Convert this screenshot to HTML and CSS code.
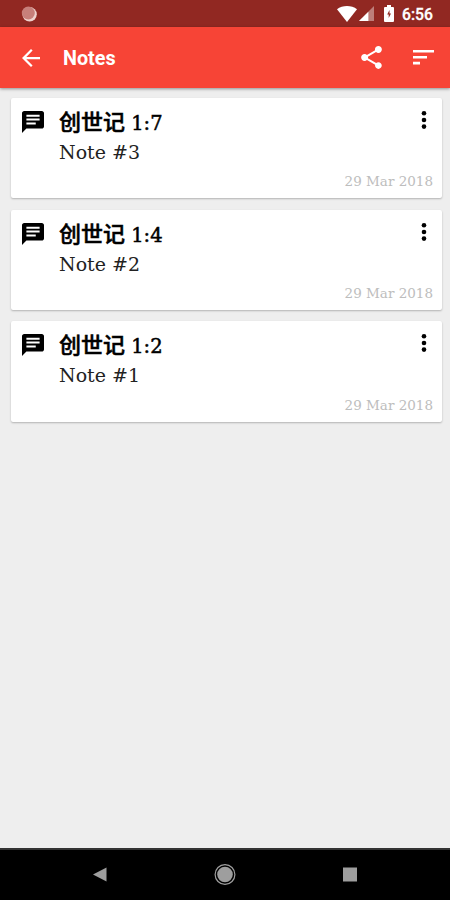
FILE: index.html
```html
<!DOCTYPE html>
<html lang="en">
<head>
<meta charset="utf-8">
<title>Notes</title>
<link rel="stylesheet" href="styles.css">
</head>
<body>
<svg class="defs" width="0" height="0">
  <symbol id="note" viewBox="2 2 20 20" preserveAspectRatio="none"><path d="M20 2H4c-1.100 0-2 .9-2 2v18l4-4h14c1.100 0 2-.9 2-2V4c0-1.100-.9-2-2-2zM6 5.400h12v1.800H6zm0 3.500h12v1.800H6zm0 3.500h8.500v1.800H6z"/></symbol>
  <symbol id="more" viewBox="0 0 8 20"><circle cx="4" cy="3.200" r="2.300"/><circle cx="4" cy="10" r="2.300"/><circle cx="4" cy="16.600" r="2.300"/></symbol>
</svg>
<div class="screen">
  <header class="status">
    <svg class="sync" viewBox="0 0 16 16"><circle cx="8.600" cy="8.300" r="7.200" fill="#efd2cd"/><circle cx="7.300" cy="7" r="6.500" fill="#c77f7a"/></svg>
    <svg class="wifi" viewBox="0 0 20 16"><path d="M0 3.200C5.500-1 14.500-1 20 3.200L10 16z"/></svg>
    <svg class="signal" viewBox="0 0 16 16"><path d="M0 16L16 0v16z" opacity=".4"/><path d="M0 16L10 6v10z"/></svg>
    <svg class="battery" viewBox="0 0 10 17"><path fill-rule="evenodd" d="M3 0h4v2h2q1 0 1 1v13q0 1-1 1H1q-1 0-1-1V3q0-1 1-1h2zM5.500 5L3.200 9.500h1.500v3.500L7 8.500H5.500z"/></svg>
    <span class="clock">6:56</span>
  </header>
  <nav class="toolbar">
    <svg class="back" viewBox="4 4 16 16"><path d="M20 11H7.830l5.590-5.590L12 4l-8 8 8 8 1.410-1.410L7.830 13H20z"/></svg>
    <h1>Notes</h1>
    <svg class="share" viewBox="3 2 18 20"><path d="M18 16.080c-.76 0-1.440.3-1.960.77L8.910 12.700c.05-.23.09-.46.09-.7s-.04-.47-.09-.7l7.050-4.110c.54.5 1.250.81 2.040.81 1.660 0 3-1.340 3-3s-1.340-3-3-3-3 1.340-3 3c0 .24.04.47.09.7L8.040 9.810C7.500 9.310 6.790 9 6 9c-1.660 0-3 1.340-3 3s1.340 3 3 3c.79 0 1.500-.31 2.040-.81l7.120 4.160c-.05.21-.08.43-.08.65 0 1.610 1.310 2.920 2.920 2.920s2.920-1.310 2.920-2.920-1.310-2.920-2.920-2.920z"/></svg>
    <svg class="sort" viewBox="0 0 21 15"><path d="M0 0h21v2.600H0zM0 6h14v2.600H0zM0 11.800h7v2.600H0z"/></svg>
  </nav>
  <main class="list">
    <article class="card">
      <svg class="note"><use href="#note"/></svg>
      <div class="text"><h2><span class="book">创世记</span> 1:7</h2><p>Note #3</p></div>
      <svg class="more"><use href="#more"/></svg>
      <time>29 Mar 2018</time>
    </article>
    <article class="card">
      <svg class="note"><use href="#note"/></svg>
      <div class="text"><h2><span class="book">创世记</span> 1:4</h2><p>Note #2</p></div>
      <svg class="more"><use href="#more"/></svg>
      <time>29 Mar 2018</time>
    </article>
    <article class="card">
      <svg class="note"><use href="#note"/></svg>
      <div class="text"><h2><span class="book">创世记</span> 1:2</h2><p>Note #1</p></div>
      <svg class="more"><use href="#more"/></svg>
      <time>29 Mar 2018</time>
    </article>
  </main>
  <footer class="navbar">
    <svg viewBox="0 0 22 22"><path d="M4 10.500L17.500 3.500v14z"/></svg>
    <svg viewBox="0 0 22 22"><circle cx="11" cy="10.500" r="9.900" fill="none" stroke="#9e9e9e" stroke-width="1.200"/><circle cx="11" cy="10.500" r="7.800"/></svg>
    <svg viewBox="0 0 22 22"><path d="M4 3.500h14v14H4z"/></svg>
  </footer>
</div>
</body>
</html>
```

FILE: styles.css
```css
* { box-sizing: border-box; }
body { margin: 0; }
h1, h2, p { margin: 0; }
svg { display: block; flex: none; }
.defs { position: absolute; }

.screen {
  width: 450px;
  height: 900px;
  display: flex;
  flex-direction: column;
  background: #eee;
  overflow: hidden;
}

.status {
  height: 27px;
  flex: none;
  display: flex;
  align-items: center;
  padding: 0 17px 0 21px;
  background: #912822;
  color: #fff;
  fill: #fff;
}
.sync { width: 16px; height: 16px; margin-right: auto; }
.wifi { width: 20px; height: 16px; }
.signal { width: 15px; height: 15px; margin-left: 2px; }
.battery { width: 10px; height: 17px; margin-left: 10px; }
.clock {
  width: 31px;
  margin-left: 8px;
  font: 500 15.700px/25px Roboto, sans-serif;
  padding-top: 2px;
  -webkit-text-stroke: .3px #fff;
}

.toolbar {
  height: 61px;
  flex: none;
  display: flex;
  align-items: center;
  padding: 0 16px 0 22px;
  background: #f74436;
  box-shadow: 0 1px 3px rgba(0, 0, 0, .4);
  fill: #fff;
}
.back { width: 18px; height: 18px; }
.toolbar h1 {
  flex: 1;
  margin-left: 23px;
  padding-top: 2px;
  color: #fff;
  font: 700 19.800px/26px Roboto, sans-serif;
}
.share { width: 21px; height: 23px; margin-right: 31px; }
.sort { width: 21px; height: 15px; }

.list {
  flex: 1;
  display: flex;
  flex-direction: column;
  gap: 11.500px;
  padding: 10px 8px 0 11px;
}
.card {
  height: 100.200px;
  display: grid;
  grid-template-columns: 22px 1fr 8px;
  grid-template-rows: 1fr auto;
  column-gap: 15.500px;
  padding: 10px 14px 8px 10.500px;
  background: #fff;
  border-radius: 2px;
  box-shadow: 0 1px 2px rgba(0, 0, 0, .25);
}
.note { width: 22px; height: 22px; margin-top: 3px; }
.more { width: 8px; height: 20px; margin-top: 2px; }
.text { font-family: "DejaVu Serif", serif; }
.card h2 {
  height: 30px;
  color: #000;
  font-size: 19.500px;
  line-height: 27px;
  font-weight: 400;
  -webkit-text-stroke: .5px #000;
  white-space: nowrap;
}
.book {
  font: 500 22px/25px "Noto Sans CJK SC", sans-serif;
  -webkit-text-stroke: .5px #000;
}
.card p {
  color: #222;
  font-size: 19px;
  line-height: 29px;
}
.card time {
  grid-column: 1 / -1;
  margin-right: -5px;
  text-align: right;
  color: #bdbdbd;
  font: 13.500px/18px "DejaVu Serif", serif;
}

.navbar {
  height: 52px;
  flex: none;
  display: flex;
  justify-content: space-between;
  align-items: center;
  padding: 0 89px;
  background: #000;
  border-top: 2px solid #333;
  fill: #9e9e9e;
}
.navbar svg { width: 22px; height: 22px; }
```
